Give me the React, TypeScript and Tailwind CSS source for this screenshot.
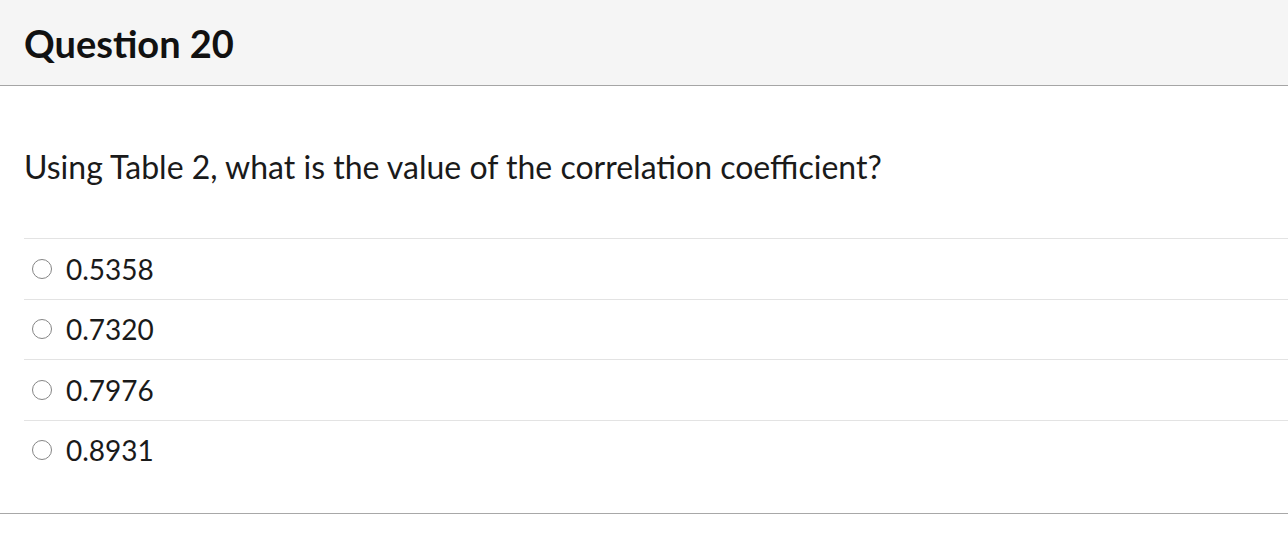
const options = ['0.5358', '0.7320', '0.7976', '0.8931']

const App = () => {
  return (
    <div className="min-h-screen bg-white" style={{ fontFamily: 'Lato, "Open Sans", sans-serif' }}>
      <div className="h-[86px] bg-[#f5f5f5] border-b border-[#a5a5a5] px-6 flex items-center">
        <h2 className="text-[38px] font-bold text-[#111111] leading-none">Question 20</h2>
      </div>
      <div className="border-b border-[#a8a8a8]">
        <div className="px-6 pt-[62px]">
          <p className="text-[32px] text-[#1a1a1a] leading-[38px]">
            Using Table 2, what is the value of the correlation coefficient?
          </p>
        </div>
        <div className="ml-6 mt-[52px] mb-[33px]">
          {options.map((opt, idx) => (
            <label
              key={idx}
              className="flex items-center h-[60.5px] border-t border-[#e3e3e3] pl-[8px] gap-[14px]"
            >
              <span className="w-[20px] h-[20px] rounded-full border-[1.5px] border-[#858585] bg-white shrink-0" />
              <span className="text-[28px] text-[#1a1a1a]">{opt}</span>
            </label>
          ))}
        </div>
      </div>
    </div>
  )
}

export default App
